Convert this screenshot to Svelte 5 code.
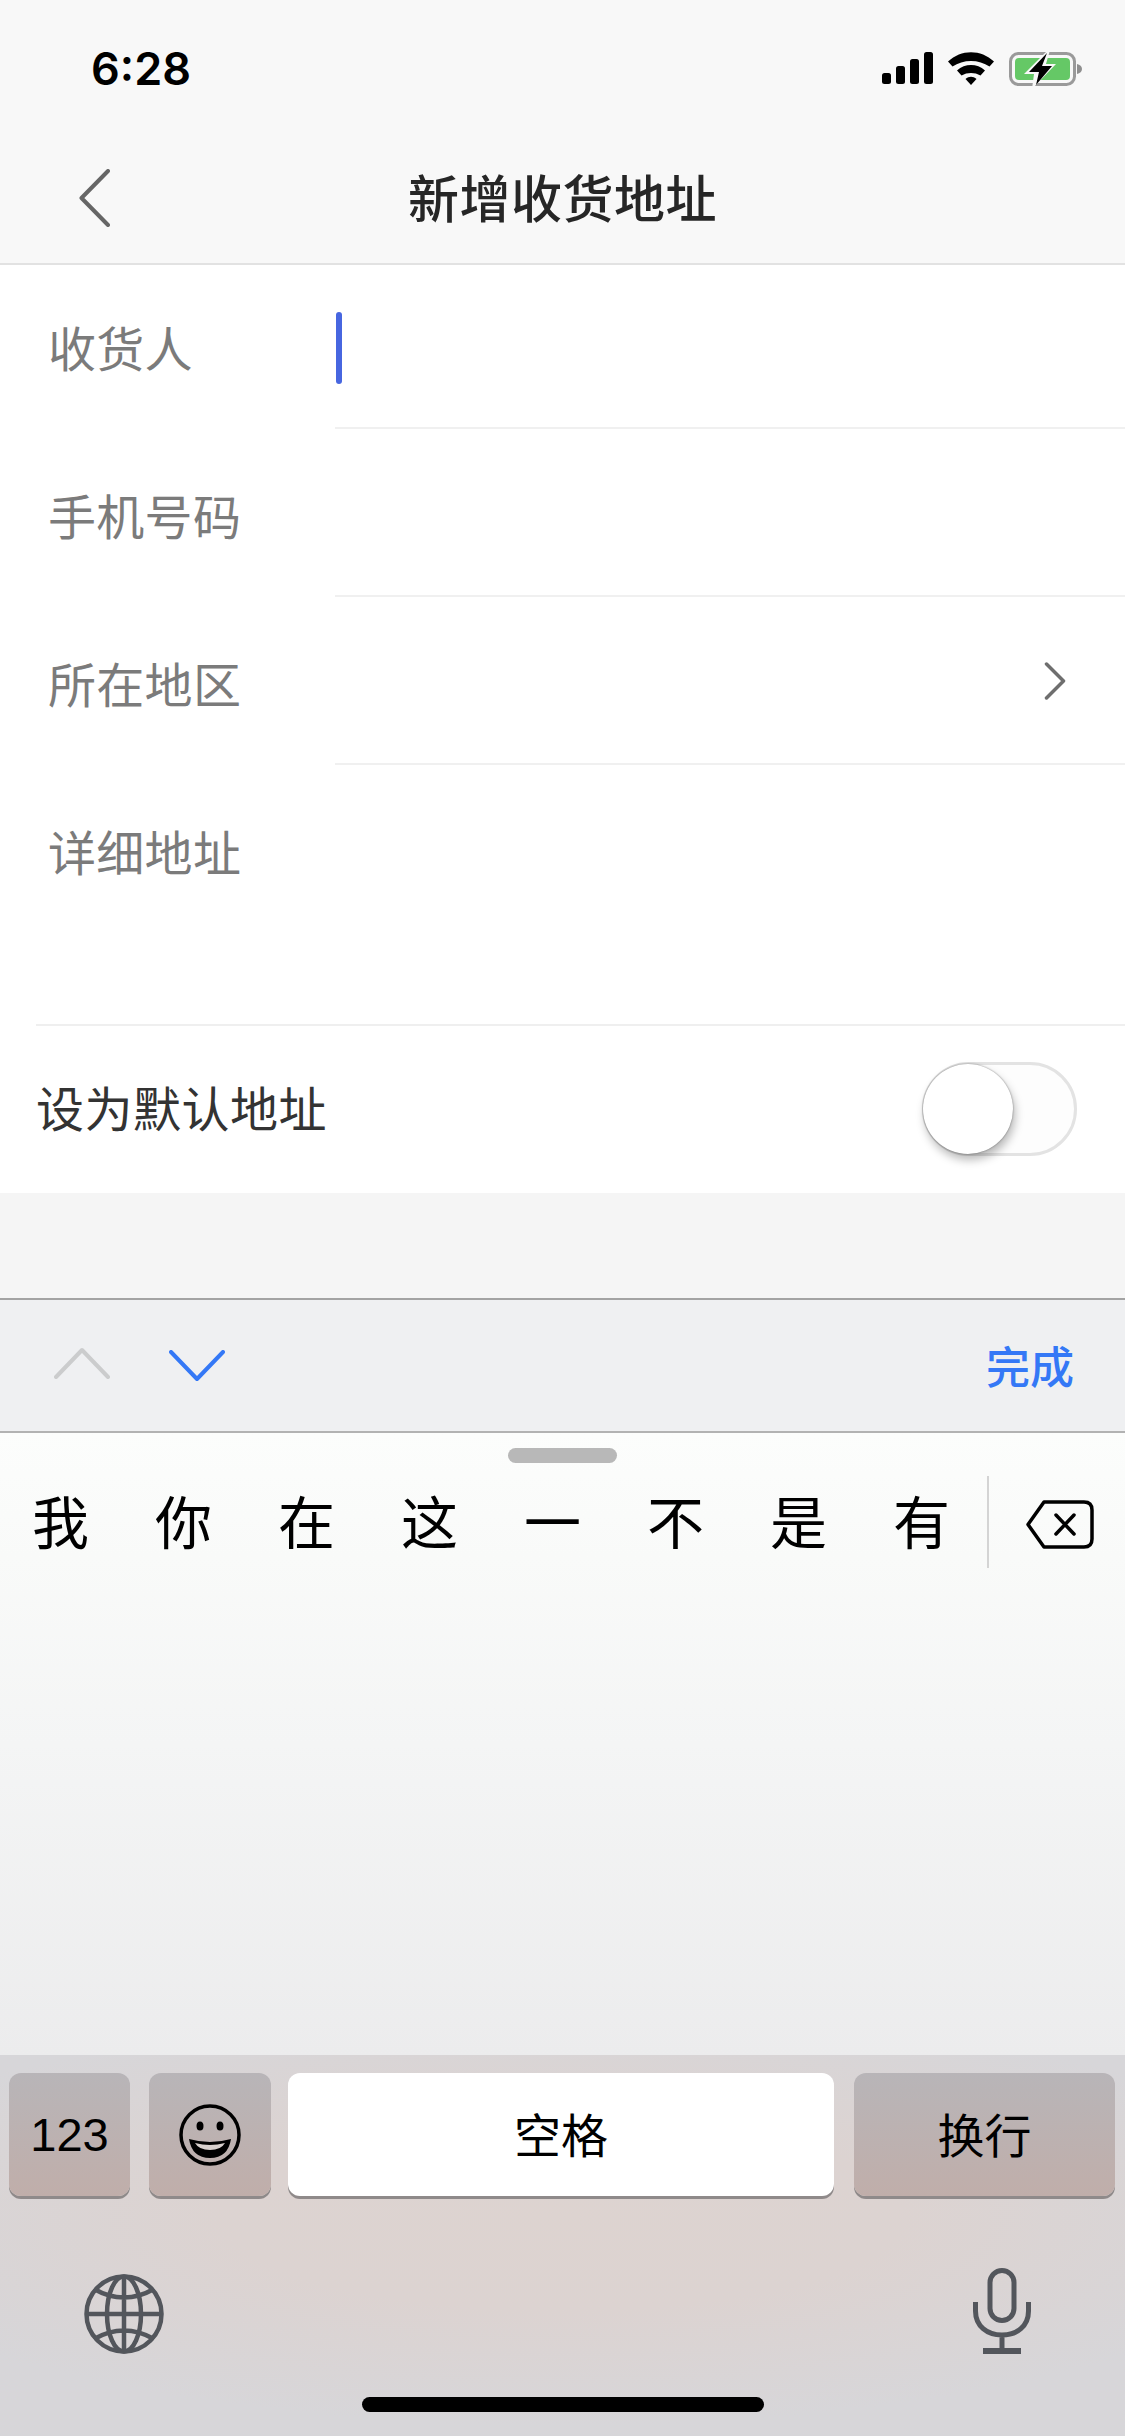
<script>
  const fields = [
    { label: "收货人", caret: true },
    { label: "手机号码" },
    { label: "所在地区", arrow: true },
  ];
  const candidates = ["我", "你", "在", "这", "一", "不", "是", "有"];
</script>

<div class="screen">
  <header class="head">
    <div class="status">
      <span class="time">6:28</span>
      <div class="status-icons">
        <svg width="51" height="32" viewBox="0 0 51 32">
          <rect x="0" y="21" width="9" height="11" rx="2.5" />
          <rect x="14" y="14" width="9" height="18" rx="2.5" />
          <rect x="28" y="7" width="9" height="25" rx="2.5" />
          <rect x="42" y="0" width="9" height="32" rx="2.5" />
        </svg>
        <svg width="46" height="33" viewBox="0 0 46 33">
          <path d="M0 9.5 C13 -3 33 -3 46 9.5 L41.5 14.5 C31 7 15 7 4.500 14.5Z" />
          <path d="M9 18.5 C17 11.200 29 11.200 37 18.5 L32.5 23.5 C26.5 20.200 19.500 20.200 13.500 23.500Z" />
          <path d="M17.500 27 C21 24 25 24 28.500 27 L23 33Z" />
        </svg>
        <svg width="73" height="34" viewBox="0 0 73 34">
          <rect x="1.500" y="1.500" width="64" height="31" rx="8" fill="none" stroke="#9a9a9a" stroke-width="3" />
          <rect x="6" y="6" width="55" height="22" rx="4" fill="#65c866" />
          <path d="M68 12 C71 12.500 73 14.500 73 17 C73 19.500 71 21.500 68 22Z" fill="#8f8f8f" />
          <path d="M39 -2 L15 22 L25 22 L23 37 L47 12 L37 12 L41 -2Z" fill="#f8f8f8" />
          <path d="M38 1 L20 20 L30 20 L27 33 L43 14 L33 14Z" fill="#000" />
        </svg>
      </div>
    </div>
    <nav class="nav">
      <svg class="back" width="31" height="58" viewBox="0 0 31 58">
        <path d="M29 2 L2.500 29 L29 56" fill="none" stroke="#666" stroke-width="4" stroke-linecap="round" stroke-linejoin="round" />
      </svg>
      <h1>新增收货地址</h1>
    </nav>
  </header>

  <section class="form">
    {#each fields as f}
      <div class="row">
        <span class="label">{f.label}</span>
        <div class="field">
          {#if f.caret}<i class="caret"></i>{/if}
          {#if f.arrow}
            <svg class="chev" width="22" height="38" viewBox="0 0 22 38">
              <path d="M2.500 2 L19.500 19 L2.500 36" fill="none" stroke="#6e6e6e" stroke-width="3.500" stroke-linecap="round" stroke-linejoin="round" />
            </svg>
          {/if}
        </div>
      </div>
    {/each}
    <div class="detail"><span class="label">详细地址</span></div>
    <div class="default-row">
      <span>设为默认地址</span>
      <div class="switch"><i class="knob"></i></div>
    </div>
  </section>

  <div class="gap"></div>

  <div class="toolbar">
    <div class="arrows">
      <svg width="56" height="32" viewBox="0 0 56 32">
        <path d="M2 30 L28 3 L54 30" fill="none" stroke="#cbcccd" stroke-width="4" stroke-linecap="round" stroke-linejoin="round" />
      </svg>
      <svg class="down" width="56" height="32" viewBox="0 0 56 32">
        <path d="M2 2 L28 29 L54 2" fill="none" stroke="#3478f6" stroke-width="4" stroke-linecap="round" stroke-linejoin="round" />
      </svg>
    </div>
    <span class="done">完成</span>
  </div>

  <div class="candidates">
    <i class="handle"></i>
    <div class="cand-row">
      <div class="words">
        {#each candidates as c}<span>{c}</span>{/each}
      </div>
      <div class="del">
        <svg width="68" height="49" viewBox="0 0 68 49">
          <path d="M18 2 H58 Q66 2 66 10 V39 Q66 47 58 47 H18 L2 24.500Z" fill="none" stroke="#000" stroke-width="3.500" stroke-linejoin="round" />
          <path d="M30 15 L48 34 M48 15 L30 34" fill="none" stroke="#000" stroke-width="3.500" stroke-linecap="round" />
        </svg>
      </div>
    </div>
  </div>

  <div class="kb-bottom">
    <div class="keys">
      <div class="key num">123</div>
      <div class="key emoji">
        <svg width="62" height="62" viewBox="0 0 62 62">
          <circle cx="31" cy="31" r="29" fill="none" stroke="#000" stroke-width="3.500" />
          <ellipse cx="21" cy="22" rx="3.500" ry="4.500" />
          <ellipse cx="41" cy="22" rx="3.500" ry="4.500" />
          <path d="M10 35 Q31 41 52 35 Q49 54 31 54 Q13 54 10 35Z" />
          <path d="M16 39 Q31 43 46 39 Q42 46 31 46 Q20 46 16 39Z" fill="#d8d0cd" />
        </svg>
      </div>
      <div class="key space"><span>空格</span></div>
      <div class="key ret"><span>换行</span></div>
    </div>
    <div class="sys">
      <svg width="80" height="80" viewBox="0 0 80 80" fill="none" stroke="#53565c" stroke-width="4.500">
        <circle cx="40" cy="40" r="37.500" />
        <ellipse cx="40" cy="40" rx="17" ry="37.500" />
        <path d="M40 2.500 V77.500 M2.500 40 H77.500 M10 15 Q40 32 70 15 M10 65 Q40 48 70 65" />
      </svg>
      <svg width="58" height="86" viewBox="0 0 58 86" fill="none" stroke="#53565c" stroke-width="5">
        <rect x="17" y="2.500" width="24" height="50" rx="12" />
        <path d="M2.500 34 V43 C2.500 58 14 67 29 67 C44 67 55.500 58 55.500 43 V34 M29 67 V82" />
        <path d="M10 83 H48" stroke-width="6" />
      </svg>
    </div>
    <i class="home"></i>
  </div>
</div>

<style>
  :global(body) {
    margin: 0;
    background: #f5f5f5;
  }
  .screen {
    width: 1125px;
    height: 2436px;
    display: flex;
    flex-direction: column;
    overflow: hidden;
    font-family: "Noto Sans CJK SC", "Noto Sans", sans-serif;
    background: #f5f5f5;
  }
  .head {
    height: 265px;
    box-sizing: border-box;
    background: #f8f8f8;
    border-bottom: 2px solid #e2e2e2;
    flex: none;
  }
  .status {
    height: 139px;
    box-sizing: border-box;
    padding: 45px 43px 0 91px;
    display: flex;
    justify-content: space-between;
    align-items: flex-start;
  }
  .time {
    font-family: Inter, "Liberation Sans", sans-serif;
    font-size: 45px;
    font-weight: 600;
    line-height: 48px;
    color: #000;
  }
  .status-icons {
    display: flex;
    gap: 15px;
    padding-top: 7px;
  }
  .nav {
    height: 124px;
    display: flex;
    align-items: center;
    justify-content: center;
    position: relative;
  }
  .back {
    position: absolute;
    left: 79px;
    top: 30px;
  }
  h1 {
    margin: 0;
    font-size: 51px;
    font-weight: 500;
    color: #262626;
    line-height: 60px;
    letter-spacing: 0.5px;
    padding-bottom: 10px;
  }
  .form {
    background: #fff;
    height: 928px;
    flex: none;
  }
  .row {
    display: flex;
    height: 168px;
  }
  .row:first-child {
    height: 164px;
  }
  .label {
    font-size: 48px;
    line-height: 60px;
    color: #7b7b7b;
    letter-spacing: 0.3px;
  }
  .row .label {
    width: 287px;
    margin-left: 48px;
    padding-top: 55px;
    flex: none;
  }
  .row:first-child .label {
    padding-top: 51px;
  }
  .field {
    flex: 1;
    border-bottom: 2px solid #f0f0f0;
    display: flex;
    align-items: center;
    justify-content: flex-end;
    padding-right: 57px;
    position: relative;
  }
  .chev {
    margin-top: 2px;
    margin-right: 2px;
  }
  .caret {
    position: absolute;
    left: 1px;
    top: 47px;
    width: 6px;
    height: 72px;
    border-radius: 3px;
    background: #4766e0;
  }
  .detail {
    height: 259px;
    box-sizing: border-box;
    padding: 55px 0 0 48px;
  }
  .default-row {
    margin-left: 36px;
    height: 168px;
    box-sizing: border-box;
    border-top: 2px solid #efefef;
    display: flex;
    align-items: center;
    justify-content: space-between;
    padding-right: 48px;
    font-size: 48px;
    letter-spacing: 0.5px;
    color: #333;
  }
  .default-row span {
    padding-bottom: 6px;
  }
  .switch {
    width: 155px;
    height: 94px;
    box-sizing: border-box;
    border: 3px solid #e3e3e3;
    border-radius: 47px;
    background: #fdfdfd;
    position: relative;
  }
  .knob {
    position: absolute;
    left: -2px;
    top: -1px;
    width: 90px;
    height: 90px;
    border-radius: 50%;
    background: #fff;
    box-shadow: 0 0 2px rgba(0, 0, 0, 0.45), 2px 6px 10px rgba(0, 0, 0, 0.28);
  }
  .gap {
    height: 105px;
    flex: none;
  }
  .toolbar {
    height: 135px;
    flex: none;
    box-sizing: border-box;
    background: #eff0f2;
    border-top: 2px solid #a3a3a3;
    border-bottom: 2px solid #b2b2b2;
    display: flex;
    align-items: center;
    justify-content: space-between;
    padding: 0 51px 0 54px;
  }
  .arrows {
    display: flex;
    gap: 59px;
    align-items: flex-start;
    padding-bottom: 2px;
  }
  .down {
    margin-top: 3px;
  }
  .done {
    font-size: 44px;
    line-height: 52px;
    color: #3478f6;
    font-weight: 500;
    padding-bottom: 2px;
  }
  .candidates {
    height: 622px;
    flex: none;
    background: linear-gradient(#fcfdfc 0%, #f9faf9 20%, #f4f5f5 50%, #ececed 100%);
    display: flex;
    flex-direction: column;
    align-items: center;
  }
  .handle {
    width: 109px;
    height: 15px;
    border-radius: 8px;
    background: #b8b8b8;
    margin-top: 15px;
  }
  .cand-row {
    align-self: stretch;
    display: flex;
    margin-top: 13px;
    height: 92px;
  }
  .words {
    display: flex;
    width: 989px;
    box-sizing: border-box;
    border-right: 2px solid #d4d4d4;
    align-items: center;
  }
  .words span {
    width: 123px;
    text-align: center;
    font-size: 57px;
    line-height: 66px;
    color: #000;
    margin-left: -1px;
    margin-right: 1px;
    padding-bottom: 6px;
  }
  .del {
    flex: 1;
    padding: 24px 0 0 37px;
  }
  .kb-bottom {
    height: 382px;
    flex: none;
    position: relative;
    background: radial-gradient(ellipse 760px 210px at 50% 42%, #ddd3d0 0%, #dcd3d1 45%, #d7d6d9 100%);
  }
  .keys {
    display: flex;
    height: 125px;
    padding: 18px 11px 0 9px;
    gap: 18px;
  }
  .key {
    height: 123px;
    border-radius: 12px;
    box-shadow: 0 3px 0 #8f8a8a;
    background: linear-gradient(#b8b5b8, #c0aeaa);
    display: flex;
    align-items: center;
    justify-content: center;
    font-size: 47px;
    color: #000;
    flex: none;
  }
  .key span {
    padding-bottom: 4px;
  }
  .num {
    width: 121px;
    font-family: "Liberation Sans", Arial, sans-serif;
    font-size: 47px;
  }
  .emoji {
    width: 122px;
    margin-left: 1px;
  }
  .space {
    width: 546px;
    margin-left: -1px;
    background: #fff;
  }
  .ret {
    width: 261px;
    margin-left: 2px;
  }
  .sys {
    display: flex;
    justify-content: space-between;
    align-items: flex-end;
    padding: 70px 94px 0 84px;
  }
  .home {
    position: absolute;
    left: 362px;
    top: 342px;
    width: 402px;
    height: 15px;
    border-radius: 8px;
    background: #000;
  }
</style>
